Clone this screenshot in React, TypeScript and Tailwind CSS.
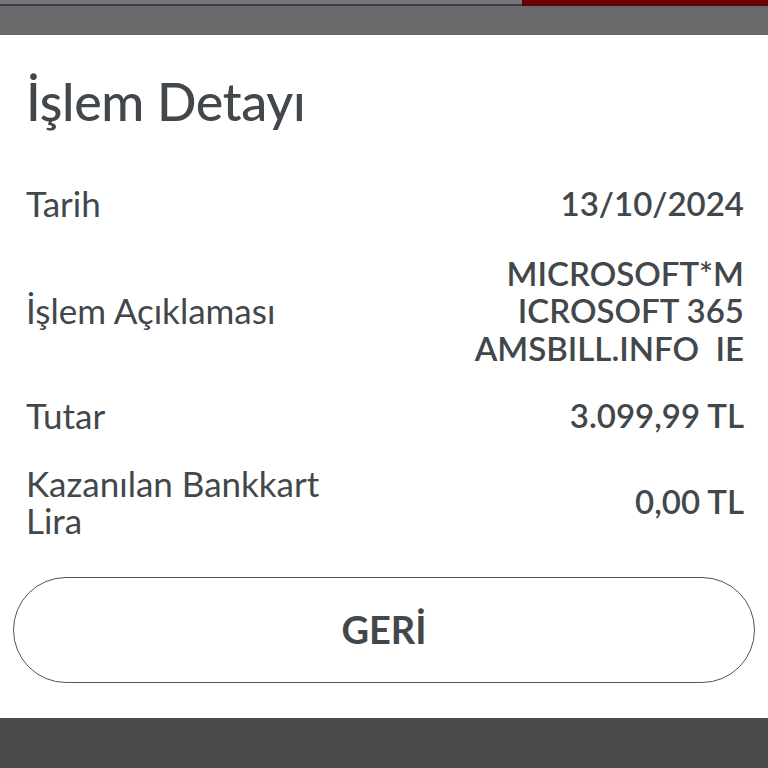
const rows = [
  { label: "Tarih", value: ["13/10/2024"], gap: "mt-0" },
  { label: "İşlem Açıklaması", value: ["MICROSOFT*M", "ICROSOFT 365", "AMSBILL.INFO  IE"], gap: "mt-[32px]" },
  { label: "Tutar", value: ["3.099,99 TL"], gap: "mt-[30px]" },
  { label: "Kazanılan Bankkart Lira", value: ["0,00 TL"], gap: "mt-[30px]" },
];

const App = () => {
  return (
    <div
      className="h-[768px] w-[768px] flex flex-col bg-[#4b4c4d] text-[#41474b] overflow-hidden"
      style={{ fontFamily: "Lato, 'Open Sans', sans-serif" }}
    >
      <div className="h-[35px] flex flex-col bg-[#68696a]">
        <div className="h-[6px] flex">
          <div className="flex-1 bg-[#76777a] border-b-2 border-[#3f4042]" />
          <div className="w-[246px] bg-[#6a0007]" />
        </div>
      </div>

      <div className="h-[683px] bg-white flex flex-col pl-[26px] pr-[24px]">
        <h1 className="mt-[40px] text-[52px] leading-none font-medium tracking-[-0.3px]">İşlem Detayı</h1>

        <div className="mt-[58px] flex flex-col">
          {rows.map((r) => (
            <div key={r.label} className={`${r.gap} flex items-center justify-between`}>
              <div className="w-[330px] text-[35px] leading-[37px]">{r.label}</div>
              <div className="text-right text-[33px] leading-[37.5px] font-semibold whitespace-pre">
                {r.value.map((v) => (
                  <div key={v}>{v}</div>
                ))}
              </div>
            </div>
          ))}
        </div>

        <button className="mt-[38px] ml-[-13px] mr-[-11px] h-[106px] shrink-0 rounded-full border-[1.5px] border-[#555] text-[38px] font-bold text-[#41474b]">
          GERİ
        </button>
      </div>

      <div className="flex-1 bg-[#4a4b4c]" />
    </div>
  );
};

export default App;
